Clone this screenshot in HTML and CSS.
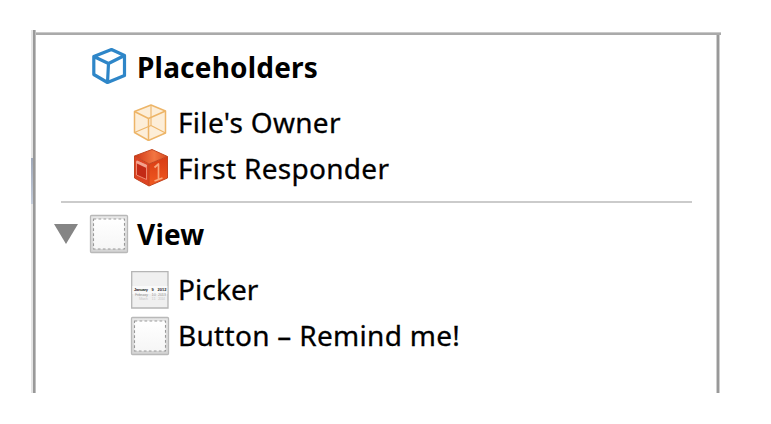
FILE: index.html
```html
<!DOCTYPE html>
<html lang="en">
<head>
<meta charset="utf-8">
<title>Document Outline</title>
<link rel="stylesheet" href="styles.css">
</head>
<body>
<main class="outline">
  <section class="group placeholders-group">
    <div class="row heading">
      <svg class="icon" viewBox="0 0 40 40" fill="none" stroke="#2e86c8" stroke-width="3.2" stroke-linejoin="round">
        <path d="M4.800 11.500 22.500 4.500 35.500 10.500V30.500L18.500 37.500 4.800 29.500ZM4.800 11.500 19.500 18.500 35.500 10.500M19.500 18.500 18.500 37.500"/>
      </svg>
      <span class="label placeholders">Placeholders</span>
    </div>
    <div class="row child">
      <svg class="icon" viewBox="0 0 40 40" fill="none" stroke="#edb568" stroke-width="1.500" stroke-linejoin="round">
        <path fill="#fdeed8" d="M4.500 10.500 21 4 35.500 10V32L18.500 39.500 4.500 31.500Z"/>
        <path d="M4.500 10.500 18.500 17.500 35.500 10M18.500 17.500V39.500"/>
        <path stroke-width="1.100" d="M21 4V24.500M4.500 31.500 21 24.500 35.500 32"/>
      </svg>
      <span class="label owner">File's Owner</span>
    </div>
    <div class="row child">
      <svg class="icon" viewBox="0 0 40 40" stroke-linejoin="round">
        <defs>
          <linearGradient id="top" x2="1"><stop stop-color="#cf3514"/><stop offset=".6" stop-color="#f27642"/><stop offset="1" stop-color="#d94a1e"/></linearGradient>
          <linearGradient id="right" y2="1" x2="0"><stop stop-color="#d83b14"/><stop offset="1" stop-color="#f15a20"/></linearGradient>
        </defs>
        <path fill="url(#top)" d="M4.500 9 22 2.500 37.500 9.500 19 17Z"/>
        <path fill="#dd4323" d="M4.500 9 19 17V39L4.500 31Z"/>
        <path fill="url(#right)" d="M19 17 37.500 9.500V31L19 39Z"/>
        <path fill="none" stroke="#c2441f" d="M4.500 9 22 2.500 37.500 9.500V31L19 39 4.500 31ZM4.500 9 19 17 37.500 9.500M19 17V39"/>
        <path fill="#c32a16" stroke="#ee8a70" d="M6.500 14 16.500 18V32.500L6.500 28Z"/>
        <path fill="none" stroke="#f2a28e" stroke-width="2.800" d="M6.500 14.800 16.500 19.500"/>
        <path fill="none" stroke="#f9a77d" stroke-width="1.700" d="M24.500 20.500 28.500 17V32.500M24.500 34 32.500 31"/>
      </svg>
      <span class="label responder">First Responder</span>
    </div>
  </section>
  <hr class="divider">
  <section class="group">
    <div class="row heading open">
      <svg class="disclosure" viewBox="0 0 24 20"><path fill="#858585" d="M0 0H24L12 20Z"/></svg>
      <svg class="icon" viewBox="0 0 40 40"><use href="#view"/></svg>
      <span class="label view">View</span>
    </div>
    <div class="row child">
      <svg class="icon" viewBox="0 0 40 40">
        <path fill="#f0f0f0" stroke="#b5b5b5" stroke-width="1.300" d="M1.700 1.700H38V38H1.700Z"/>
        <path fill="#f9f9f9" d="M2.500 16H37.300V24H2.500Z"/>
        <g class="dates">
          <text class="now" x="4" y="20.500" textLength="14">January</text><text class="now" x="21.500" y="20.500">9</text><text class="now" x="27.500" y="20.500" textLength="9">2012</text>
          <text x="5" y="26" textLength="13">February</text><text x="21.500" y="26">10</text><text x="28" y="26" textLength="8">2013</text>
          <text class="far" x="9" y="30" textLength="9">March</text><text class="far" x="21.500" y="30">11</text><text class="far" x="28" y="30" textLength="7">2014</text>
        </g>
      </svg>
      <span class="label picker">Picker</span>
    </div>
    <div class="row child">
      <svg class="icon" viewBox="0 0 40 40">
        <defs>
          <linearGradient id="paper" x2="0" y2="1"><stop stop-color="#fff"/><stop offset="1" stop-color="#f6f6f6"/></linearGradient>
          <linearGradient id="frame" x2="0" y2="1"><stop stop-color="#e8e8e8"/><stop offset="1" stop-color="#d4d4d4"/></linearGradient>
          <g id="view">
            <rect fill="url(#frame)" stroke="#b9b9b9" stroke-width="1.300" x="1.500" y="1.500" width="37" height="37" rx="1"/>
            <path fill="url(#paper)" stroke="#999" stroke-width="1.100" stroke-dasharray="2.700 2.300" d="M4.500 5H35.500V35H4.500Z"/>
          </g>
        </defs>
        <use href="#view"/>
      </svg>
      <span class="label button">Button – Remind me!</span>
    </div>
  </section>
</main>
</body>
</html>
```
FILE: styles.css
```css
* { box-sizing: border-box; }
body {
  margin: 0;
  padding: 30px 50px 0 31px;
  background: #fff;
  color: #000;
  font-family: "Noto Sans", "Open Sans", sans-serif;
}
.outline {
  width: 690px;
  height: 363px;
  padding: 12px 29px 0 22px;
  background:
    linear-gradient(#a0a9ba, #c3cbd9) 0 128px / 2px 46px no-repeat,
    linear-gradient(90deg, #e5e5e5 0 2px, #999 2px 4px, #c0c0c0 4px 5px) 0 0 / 5px 100% no-repeat,
    linear-gradient(#c9c9c9 0 1px, #aaa 1px 3px) 0 2px / 100% 3px no-repeat,
    linear-gradient(90deg, #cfcfcf 0 1px, #999 1px 3px, #cfcfcf 3px 4px) 685px 3px / 4px 360px no-repeat;
}
.row {
  display: flex;
  align-items: center;
  height: 46px;
  gap: 8px;
}
.heading { padding-left: 36px; margin-bottom: 10px; }
.heading.open { padding-left: 1px; }
.child { padding-left: 77px; }
.icon { width: 40px; height: 40px; flex: none; }
.disclosure { width: 24px; height: 20px; flex: none; margin-right: 3px; }
.label {
  margin-top: -2px;
  font-size: 28px;
  line-height: 46px;
  letter-spacing: .3px;
  white-space: nowrap;
  -webkit-text-stroke: .3px #000;
}
.heading .label {
  margin-top: 0;
  font-weight: 700;
  letter-spacing: .2px;
  -webkit-text-stroke: 0;
}
.placeholders-group .label { margin-top: 2px; }
.placeholders-group .heading .label { margin-top: 4px; }
.label.picker { letter-spacing: .1px; }
.divider {
  height: 2px;
  margin: 11px 0 8px 8px;
  border: 0;
  background: #cbcbcb;
}
.dates { font: 4px "Liberation Sans", sans-serif; fill: #999; }
.now { font-weight: 700; fill: #222; }
.far { fill: #ccc; }
```
